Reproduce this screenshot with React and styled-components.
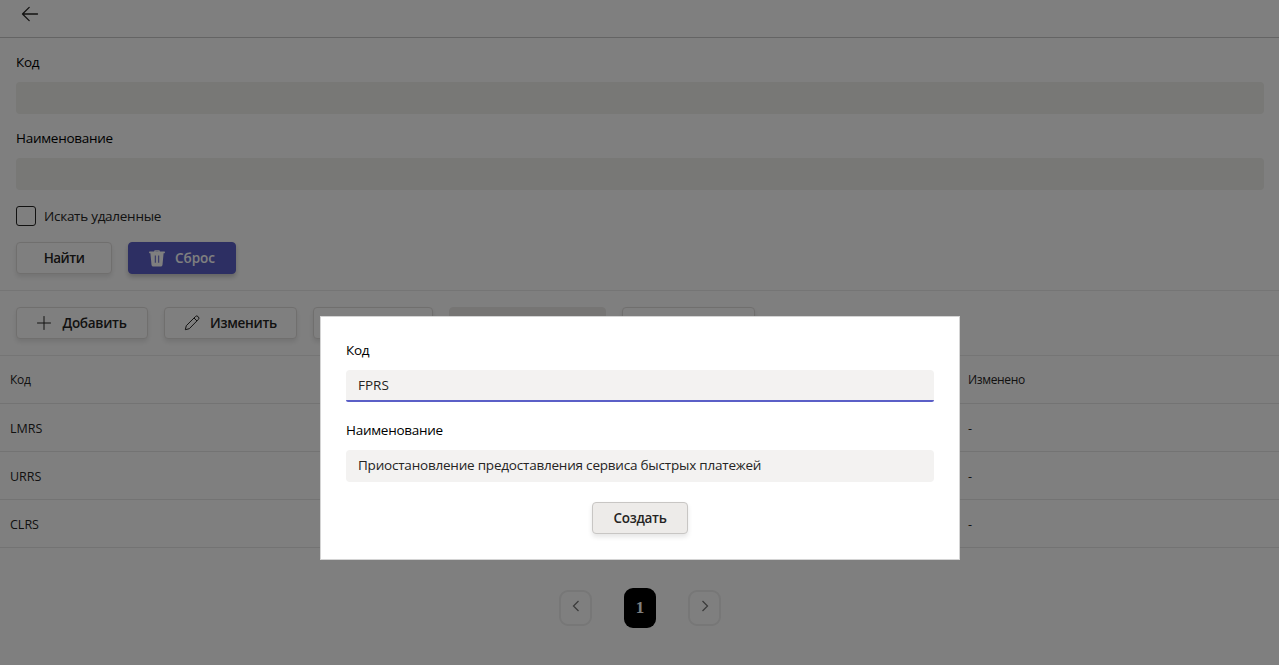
import React from "react";
import styled, { createGlobalStyle } from "styled-components";

const Global = createGlobalStyle`
  * { box-sizing: border-box; }
  body {
    margin: 0;
    background: #fff;
    color: #252423;
    font-family: "Open Sans", "Noto Sans", sans-serif;
    font-size: 13.5px;
    line-height: 20px;
  }
`;

const Page = styled.div`
  height: 665px;
  overflow: hidden;
`;

const Header = styled.header`
  height: 38px;
  padding: 4px 20px 0;
  border-bottom: 1px solid #c8c8c8;
  svg { display: block; }
`;

const Filters = styled.section`
  display: flex;
  flex-direction: column;
  height: 253px;
  padding: 14px 15px 0 16px;
  border-bottom: 1px solid #ebebeb;
`;

const Text = styled.span`
  display: inline-block;
  white-space: nowrap;
  letter-spacing: ${(p) => p.$ls ?? -0.27}px;
`;

const Label = styled.label`
  display: block;
  height: 20px;
  margin-bottom: 10px;
  color: #000;
`;

const Field = styled.div`
  height: 32px;
  margin-bottom: ${(p) => p.$gap || 14}px;
  padding: 5px 12px;
  border-radius: ${(p) => (p.$active ? "4px 4px 2px 2px" : "4px")};
  background: ${(p) => (p.$dim ? "#f0f0ec" : "#f3f2f1")};
  border-bottom: 2px solid ${(p) => (p.$active ? "#5b5fc7" : "transparent")};
`;

const CheckRow = styled.label`
  display: flex;
  align-items: center;
  gap: 8px;
  height: 20px;
  margin: 2px 0 16px;
`;

const Box = styled.span`
  width: 20px;
  height: 20px;
  border: 1px solid #252423;
  border-radius: 3px;
`;

const Buttons = styled.div`
  display: flex;
  gap: 16px;
`;

const Button = styled.button`
  display: flex;
  align-items: center;
  justify-content: center;
  gap: ${(p) => p.$gap || 10}px;
  width: ${(p) => p.$w}px;
  height: 32px;
  padding: 0;
  border: 1px solid ${(p) => (p.$primary ? "#5b5fc7" : p.$disabled ? "#edebe9" : p.$filled ? "#c8c6c4" : "#e1dfdd")};
  border-radius: 4px;
  background: ${(p) => (p.$primary ? "#5b5fc7" : p.$disabled || p.$filled ? "#edebe9" : "#fff")};
  color: ${(p) => (p.$primary ? "#fff" : "#252423")};
  box-shadow: ${(p) => (p.$disabled ? "none" : p.$primary ? "0 3px 5px rgba(0,0,0,.22)" : "0 3px 5px rgba(0,0,0,.1)")};
  font: 600 13.5px/20px "Open Sans", "Noto Sans", sans-serif;
`;

const Toolbar = styled(Buttons)`
  height: 65px;
  padding: 16px 16px 0;
  border-bottom: 1px solid #ebebeb;
`;

const Row = styled.div`
  display: grid;
  grid-template-columns: 958px 1fr;
  align-items: center;
  height: 48px;
  padding-left: 10px;
  border-bottom: 1px solid #e6e6e6;
  font-size: 12px;
`;

const DataRow = styled(Row)`
  padding-top: 2px;
  font-size: 12.5px;
`;

const Pager = styled.nav`
  display: flex;
  align-items: center;
  justify-content: center;
  gap: 32px;
  padding-top: 40px;
  padding-left: 1px;
`;

const PageArrow = styled.button`
  display: grid;
  place-items: center;
  width: 33px;
  height: 36px;
  padding: 0 0 4px;
  border: 2px solid #eee;
  border-radius: 9px;
  background: transparent;
`;

const PageNumber = styled.span`
  width: 32px;
  height: 40px;
  border-radius: 9px;
  background: #000;
  color: #fff;
  font: 700 17px/39px "Liberation Serif", serif;
  text-align: center;
`;

const Overlay = styled.div`
  position: fixed;
  inset: 0;
  background: rgba(0, 0, 0, 0.5);
`;

const Dialog = styled.form`
  position: absolute;
  left: 320px;
  top: 316px;
  display: flex;
  flex-direction: column;
  width: 640px;
  height: 244px;
  padding: 23px 25px;
  border: 1px solid #d4d4d4;
  background: #fff;
`;

const Center = styled.div`
  display: flex;
  justify-content: center;
`;

const BackIcon = () => (
  <svg width="20" height="20" viewBox="0 0 20 20" fill="none" stroke="#252423" strokeWidth="1.3" strokeLinecap="round" strokeLinejoin="round">
    <path d="M17.5 10H2.5M9.2 3.4L2.5 10l6.7 6.6" />
  </svg>
);

const TrashIcon = () => (
  <svg width="16" height="17" viewBox="0 0 16 17" fill="#fff">
    <path fillRule="evenodd" d="M5.2 1.6V1.200C5.200.600 5.700.200 6.200.200h3.600c.600 0 1 .400 1 1v.4H15.500c.3 0 .4.200.4.500v.6c0 .3-.2.500-.5.500h-.8l-1.100 11.600c-.1 1-.9 1.800-1.900 1.800H4.400c-1 0-1.800-.8-1.900-1.800L1.400 3.200H.600c-.3 0-.5-.2-.5-.5v-.6c0-.3.2-.5.5-.5h4.600zM6.500 1.600h3v-.4h-3v.4zM5.800 5.400v7.300h1V5.400h-1zm3.400 0v7.300h1V5.400h-1z" />
  </svg>
);

const PlusIcon = () => (
  <svg width="14" height="14" viewBox="0 0 14 14" stroke="#252423" strokeWidth="1" strokeLinecap="round">
    <path d="M7 .5v13M.5 7h13" />
  </svg>
);

const PencilIcon = () => (
  <svg width="16" height="16" viewBox="0 0 16 16" fill="none" stroke="#252423" strokeWidth="1" strokeLinejoin="round">
    <path d="M1.300 14.700l1-4L11.300 1.700a1.900 1.900 0 0 1 2.900 0 1.900 1.900 0 0 1 0 2.900L5.300 13.700l-4 1zM10 3l3 3" />
  </svg>
);

const Chevron = ({ right }) => (
  <svg width="8" height="12" viewBox="0 0 8 12" fill="none" stroke="#777" strokeWidth="1.3">
    <path d={right ? "M1.500 1L6.500 6l-5 5" : "M6.500 1L1.500 6l5 5"} />
  </svg>
);

const rows = ["LMRS", "URRS", "CLRS"];

export default function App() {
  return (
    <>
      <Global />
      <Page>
        <Header><BackIcon /></Header>
        <Filters>
          <Label><Text>Код</Text></Label>
          <Field $dim />
          <Label><Text>Наименование</Text></Label>
          <Field $dim />
          <CheckRow><Box /><Text>Искать удаленные</Text></CheckRow>
          <Buttons>
            <Button type="button" $w={96}><Text $ls={-0.5}>Найти</Text></Button>
            <Button type="button" $w={108} $primary><TrashIcon /><Text $ls={0}>Сброс</Text></Button>
          </Buttons>
        </Filters>
        <Toolbar>
          <Button type="button" $w={132} $gap={11}><PlusIcon /><Text>Добавить</Text></Button>
          <Button type="button" $w={133}><PencilIcon /><Text>Изменить</Text></Button>
          <Button type="button" $w={120} />
          <Button type="button" $w={157} $disabled />
          <Button type="button" $w={133} />
        </Toolbar>
        <Row><Text>Код</Text><Text $ls={-0.35}>Изменено</Text></Row>
        {rows.map((code) => (
          <DataRow key={code}><Text $ls={0}>{code}</Text><Text>-</Text></DataRow>
        ))}
        <Pager>
          <PageArrow><Chevron /></PageArrow>
          <PageNumber>1</PageNumber>
          <PageArrow><Chevron right /></PageArrow>
        </Pager>
      </Page>
      <Overlay>
        <Dialog>
          <Label><Text>Код</Text></Label>
          <Field $active $gap={18}><Text $ls={0}>FPRS</Text></Field>
          <Label><Text>Наименование</Text></Label>
          <Field $gap={20}><Text $ls={-0.21}>Приостановление предоставления сервиса быстрых платежей</Text></Field>
          <Center><Button type="button" $w={96} $filled><Text>Создать</Text></Button></Center>
        </Dialog>
      </Overlay>
    </>
  );
}
